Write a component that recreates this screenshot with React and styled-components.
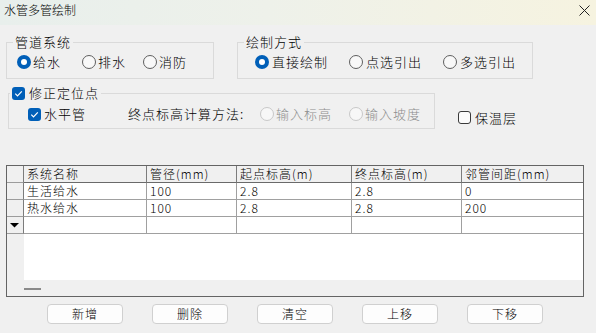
import React from "react";
import styled, { createGlobalStyle, css } from "styled-components";

const Global = createGlobalStyle`
  html, body { margin: 0; padding: 0; background: #f0f0f0; }
  body { font-family: "Noto Sans CJK SC", "Noto Sans", sans-serif; color: #000; font-weight: 300; }
  * { box-sizing: border-box; }
`;

const Window = styled.div`
  width: 596px;
  height: 333px;
  background: #f0f0f0;
  display: flex;
  flex-direction: column;
  overflow: hidden;
`;

const TitleBar = styled.div`
  height: 25px;
  flex: none;
  display: flex;
  align-items: flex-start;
  justify-content: space-between;
  padding: 2px 6px 0 4px;
  background: linear-gradient(90deg, #e8efec 0%, #eef1ea 45%, #f6f3e0 100%);
`;

const Title = styled.span`
  font-size: 12px;
  line-height: 16px;
`;

const Close = styled.span`
  display: flex;
  margin-top: 3px;
`;

const Content = styled.div`
  display: flex;
  flex-direction: column;
  padding-top: 9px;
`;

const TopRow = styled.div`
  display: flex;
  gap: 23px;
  padding-left: 6px;
`;

const MidRow = styled.div`
  display: flex;
  align-items: flex-start;
  margin-top: 6px;
  padding-left: 8px;
`;

const Group = styled.fieldset`
  margin: 0;
  padding: 0;
  min-width: 0;
  border: 1px solid #dadada;
  width: ${(p) => p.$w}px;
`;

const Legend = styled.legend`
  padding: 0 2px;
  margin-left: ${(p) => p.$ml}px;
  font-size: 13px;
  line-height: 16px;
  letter-spacing: 1px;
  display: flex;
  align-items: center;
  gap: 4px;
`;

const GroupBody = styled.div`
  display: flex;
  align-items: center;
  height: 16px;
  box-sizing: content-box;
  padding: ${(p) => p.$pad};
`;

const Item = styled.label`
  display: inline-flex;
  align-items: center;
  gap: ${(p) => p.$gap ?? 2}px;
  font-size: 13px;
  line-height: 16px;
  letter-spacing: 1px;
  white-space: nowrap;
  flex: none;
  width: ${(p) => (p.$w ? `${p.$w}px` : "auto")};
  color: ${(p) => (p.$disabled ? "#8d8d8d" : "#000")};
`;

const Text = styled.span`
  font-size: 13px;
  line-height: 16px;
  letter-spacing: 1px;
  white-space: nowrap;
  flex: none;
  width: ${(p) => (p.$w ? `${p.$w}px` : "auto")};
`;

const RadioDot = styled.span`
  width: 14px;
  height: 14px;
  border-radius: 50%;
  flex: none;
  display: flex;
  align-items: center;
  justify-content: center;
  ${(p) =>
    p.$checked
      ? css`
          background: #005fb8;
        `
      : p.$disabled
      ? css`
          background: #f7f7f7;
          border: 1px solid #c8c8c8;
        `
      : css`
          background: #f8f8f8;
          border: 1px solid #5f5f5f;
        `}
  &::after {
    content: "";
    display: ${(p) => (p.$checked ? "block" : "none")};
    width: 6px;
    height: 6px;
    border-radius: 50%;
    background: #fff;
  }
`;

const Box = styled.span`
  width: 13px;
  height: 13px;
  border-radius: 3px;
  flex: none;
  display: flex;
  align-items: center;
  justify-content: center;
  ${(p) =>
    p.$checked
      ? css`
          background: #005fb8;
        `
      : css`
          background: #fbfbfb;
          border: 1px solid #3a3a3a;
        `}
`;

const SideCheck = styled.div`
  margin-left: 23px;
  margin-top: 20px;
`;

const Radio = ({ checked, disabled, w, gap, children }) => (
  <Item $w={w} $gap={gap} $disabled={disabled}>
    <RadioDot $checked={checked} $disabled={disabled} />
    {children}
  </Item>
);

const Check = ({ checked }) => (
  <Box $checked={checked}>
    {checked && (
      <svg width="11" height="11" viewBox="0 0 11 11">
        <path d="M2.3 5.6 L4.5 7.8 L8.8 3.3" fill="none" stroke="#fff" strokeWidth="1.2" />
      </svg>
    )}
  </Box>
);

/* ---------- table ---------- */
const Table = styled.div`
  margin: 36px 0 0 6px;
  width: 578px;
  height: 132px;
  border: 1px solid #646464;
  display: flex;
  flex-direction: column;
  background: #f0f0f0;
  font-size: 12px;
  letter-spacing: 1px;
`;

const Grid = styled.div`
  display: grid;
  grid-template-columns: 17px 123px 90px 115px 110px 121px;
  grid-auto-rows: 17px;
  & > *:nth-child(6n) {
    border-right: none;
  }
`;

const Cell = styled.div`
  height: 17px;
  padding-left: 3px;
  line-height: 16px;
  white-space: nowrap;
  overflow: hidden;
  display: flex;
  align-items: center;
  ${(p) =>
    p.$kind === "head"
      ? css`
          background: #f0f0f0;
          border-right: 1px solid #7c7c7c;
          border-bottom: 1px solid #6a6a6a;
        `
      : p.$kind === "side"
      ? css`
          background: #f0f0f0;
          border-right: 1px solid #7c7c7c;
          border-bottom: 1px solid #9c9c9c;
        `
      : css`
          background: #fff;
          border-right: 1px solid #a0a0a0;
          border-bottom: 1px solid #a0a0a0;
        `}
`;

const Filler = styled.div`
  flex: 1;
  display: flex;
`;

const FillSide = styled.div`
  width: 17px;
  background: #f0f0f0;
`;

const FillBody = styled.div`
  flex: 1;
  background: #fff;
`;

const HScroll = styled.div`
  height: 16px;
  flex: none;
  background: #f0f0f0;
  display: flex;
  align-items: center;
  padding-left: 17px;
`;

const Thumb = styled.span`
  width: 17px;
  height: 2px;
  background: #8a8a8a;
  margin-top: 2px;
`;

/* ---------- buttons ---------- */
const ButtonRow = styled.div`
  display: flex;
  gap: 29px;
  margin-top: 7px;
  padding-left: 47px;
`;

const Button = styled.button`
  width: 76px;
  height: 20px;
  padding: 0;
  border: 1px solid #d0d0d0;
  border-radius: 4px;
  background: #fdfdfd;
  font-family: "Noto Sans CJK SC", sans-serif;
  font-weight: 300;
  font-size: 12px;
  letter-spacing: 1px;
  line-height: 16px;
  color: #000;
`;

const headers = ["系统名称", "管径(mm)", "起点标高(m)", "终点标高(m)", "邻管间距(mm)"];
const rows = [
  ["生活给水", "100", "2.8", "2.8", "0"],
  ["热水给水", "100", "2.8", "2.8", "200"],
];

export default function App() {
  return (
    <>
      <Global />
      <Window>
        <TitleBar>
          <Title>水管多管绘制</Title>
          <Close>
            <svg width="11" height="11" viewBox="0 0 11 11">
              <path d="M0.5 0.5 L10.5 10.5 M10.5 0.5 L0.5 10.5" stroke="#222" strokeWidth="1" />
            </svg>
          </Close>
        </TitleBar>
        <Content>
          <TopRow>
            <Group $w={208}>
              <Legend $ml={6}>管道系统</Legend>
              <GroupBody $pad="4px 0 8px 10px">
                <Radio checked w={65}>给水</Radio>
                <Radio w={61}>排水</Radio>
                <Radio>消防</Radio>
              </GroupBody>
            </Group>
            <Group $w={296}>
              <Legend $ml={6}>绘制方式</Legend>
              <GroupBody $pad="4px 0 8px 17px">
                <Radio checked w={94} gap={3}>直接绘制</Radio>
                <Radio w={94} gap={3}>点选引出</Radio>
                <Radio gap={3}>多选引出</Radio>
              </GroupBody>
            </Group>
          </TopRow>
          <MidRow>
            <Group $w={427}>
              <Legend $ml={1}>
                <Check checked />
                修正定位点
              </Legend>
              <GroupBody $pad="5px 0 6px 19px">
                <Item $w={100} $gap={3}>
                  <Check checked />
                  水平管
                </Item>
                <Text $w={132}>终点标高计算方法:</Text>
                <Radio disabled w={89}>输入标高</Radio>
                <Radio disabled>输入坡度</Radio>
              </GroupBody>
            </Group>
            <SideCheck>
              <Item $gap={4}>
                <Check />
                保温层
              </Item>
            </SideCheck>
          </MidRow>
          <Table>
            <Grid>
              <Cell $kind="side" />
              {headers.map((h) => (
                <Cell key={h} $kind="head">{h}</Cell>
              ))}
              {rows.map((r, i) => (
                <React.Fragment key={i}>
                  <Cell $kind="side" />
                  {r.map((v, j) => (
                    <Cell key={j}>{v}</Cell>
                  ))}
                </React.Fragment>
              ))}
              <Cell $kind="side">
                <svg width="9" height="5" viewBox="0 0 9 5">
                  <polygon points="0,0 9,0 4.5,4.5" fill="#000" />
                </svg>
              </Cell>
              {[0, 1, 2, 3, 4].map((k) => (
                <Cell key={k} />
              ))}
            </Grid>
            <Filler>
              <FillSide />
              <FillBody />
            </Filler>
            <HScroll>
              <Thumb />
            </HScroll>
          </Table>
          <ButtonRow>
            {["新增", "删除", "清空", "上移", "下移"].map((b) => (
              <Button key={b}>{b}</Button>
            ))}
          </ButtonRow>
        </Content>
      </Window>
    </>
  );
}
